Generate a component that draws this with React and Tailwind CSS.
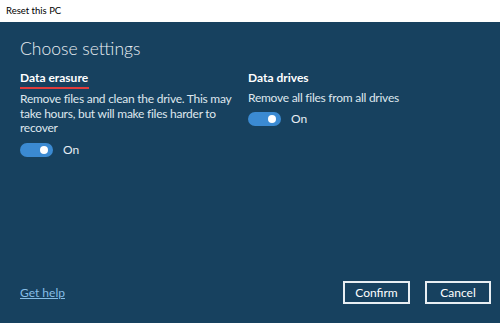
export default function App() {
  const Toggle = () => (
    <div className="flex items-center gap-[10px]">
      <div className="relative w-[33px] h-[14px] rounded-full bg-[#3b8ad2]">
        <div className="absolute right-[5px] top-[3px] w-[8px] h-[8px] rounded-full bg-white" />
      </div>
      <span className="text-[12px] text-[#e6edf3]">On</span>
    </div>
  );
  return (
    <div className="w-[500px] h-[323px] flex flex-col overflow-hidden" style={{ fontFamily: 'Lato, "Noto Sans", sans-serif' }}>
      <div className="h-[22px] bg-white flex items-center px-[6px] text-[9.5px] text-black">Reset this PC</div>
      <div className="flex-1 bg-[#17415f] flex flex-col pl-[20px] pr-[9px] pt-[15px] pb-[19px]">
        <div className="text-[17.5px] leading-[24px] font-light text-[#e8eef3]">Choose settings</div>
        <div className="flex mt-[9px]">
          <div className="w-[228px] flex flex-col">
            <div className="text-[12px] leading-[16px] font-bold text-white">Data erasure</div>
            <div className="h-[2px] w-[69px] bg-[#e03c3c] mt-[1px]" />
            <div className="w-[218px] text-[12px] tracking-[-0.25px] leading-[14.5px] text-[#dfe7ee] mt-[3px]">
              Remove files and clean the drive. This may take hours, but will make files harder to recover
            </div>
            <div className="mt-[5px]"><Toggle /></div>
          </div>
          <div className="flex flex-col">
            <div className="text-[12px] leading-[16px] font-bold text-white">Data drives</div>
            <div className="text-[12px] tracking-[-0.25px] leading-[14.5px] text-[#dfe7ee] mt-[5px]">Remove all files from all drives</div>
            <div className="mt-[4px]"><Toggle /></div>
          </div>
        </div>
        <div className="flex-1" />
        <div className="flex items-center">
          <a className="text-[12px] text-[#86bde6] underline">Get help</a>
          <div className="flex-1" />
          <button className="w-[67px] h-[23px] border-2 border-[#e8eef3] text-[12px] text-white">Confirm</button>
          <button className="ml-[15px] w-[66px] h-[23px] border-2 border-[#e8eef3] text-[12px] text-white">Cancel</button>
        </div>
      </div>
    </div>
  );
}
